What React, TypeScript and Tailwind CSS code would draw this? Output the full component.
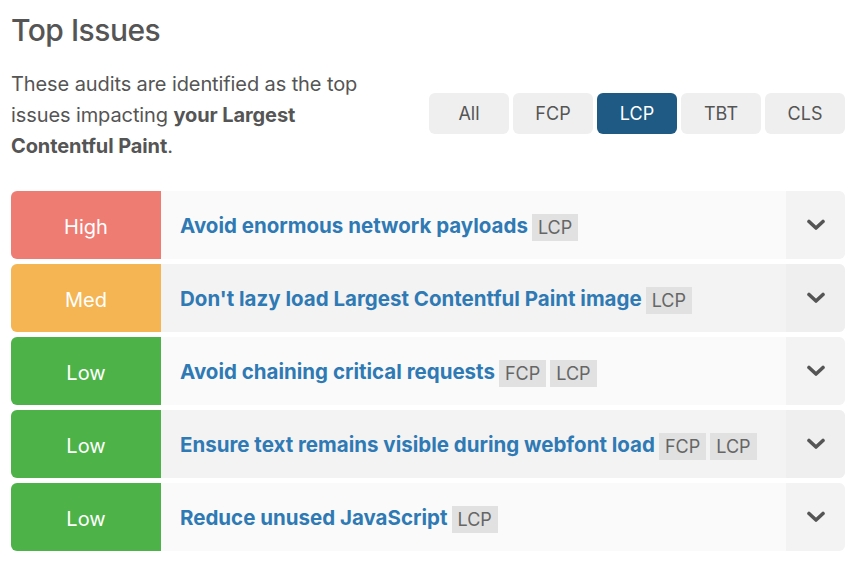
type Issue = {
  level: "High" | "Med" | "Low";
  title: string;
  tags: string[];
};

const issues: Issue[] = [
  { level: "High", title: "Avoid enormous network payloads", tags: ["LCP"] },
  { level: "Med", title: "Don't lazy load Largest Contentful Paint image", tags: ["LCP"] },
  { level: "Low", title: "Avoid chaining critical requests", tags: ["FCP", "LCP"] },
  { level: "Low", title: "Ensure text remains visible during webfont load", tags: ["FCP", "LCP"] },
  { level: "Low", title: "Reduce unused JavaScript", tags: ["LCP"] },
];

const levelClass = {
  High: "bg-[#ef7c73]",
  Med: "bg-[#f4b552]",
  Low: "bg-[#4db348]",
};

const filters = ["All", "FCP", "LCP", "TBT", "CLS"];

const Chevron = () => (
  <svg width="18" height="12" viewBox="0 0 18 12" className="text-[#555]">
    <path d="M2 2.5 L9 9 L16 2.5" fill="none" stroke="currentColor" strokeWidth="3.6" strokeLinecap="round" strokeLinejoin="round" />
  </svg>
);

const IssueRow = ({ issue, index }: { issue: Issue; index: number }) => {
  const even = index % 2 === 1;
  return (
    <div className={`flex h-[68px] rounded-md overflow-hidden ${even ? "bg-[#f3f3f3]" : "bg-[#fafafa]"}`}>
      <div className={`w-[150px] shrink-0 flex items-center justify-center pt-[3px] text-white text-[20px] ${levelClass[issue.level]}`}>
        {issue.level}
      </div>
      <div className="flex-1 flex items-center pl-[19px] gap-[4px] pt-[2px]">
        <span className="text-[#2f7ab4] font-bold text-[20.5px]">{issue.title}</span>
        {issue.tags.map((t) => (
          <span key={t} className="bg-[#e1e1e1] text-[#666] text-[18px] px-[6px] h-[27px] flex items-center mt-[2px]">
            {t}
          </span>
        ))}
      </div>
      <div className={`w-[59px] shrink-0 flex items-center justify-center ${even ? "bg-[#efefef]" : "bg-[#f3f3f3]"}`}>
        <Chevron />
      </div>
    </div>
  );
};

const App = () => {
  return (
    <div className="w-[856px] h-[576px] bg-white px-[11px] pt-[11px] font-['Inter',sans-serif]">
      <h2 className="text-[30px] leading-[38px] font-medium text-[#555] tracking-[-0.5px]">Top Issues</h2>
      <div className="flex items-center justify-between mt-[20px]">
        <p className="w-[375px] text-[20px] leading-[31px] text-[#555] tracking-[-0.1px]">
          These audits are identified as the top issues impacting <b className="font-bold">your Largest Contentful Paint</b>.
        </p>
        <div className="flex gap-[4px] -mt-[4px]">
          {filters.map((f) => (
            <button
              key={f}
              className={`w-[80px] h-[41px] rounded-md text-[18px] ${f === "LCP" ? "bg-[#1e5a84] text-white" : "bg-[#efefef] text-[#555]"}`}
            >
              {f}
            </button>
          ))}
        </div>
      </div>
      <div className="flex flex-col gap-[5px] mt-[29px]">
        {issues.map((issue, i) => (
          <IssueRow key={i} issue={issue} index={i} />
        ))}
      </div>
    </div>
  );
};

export default App;
